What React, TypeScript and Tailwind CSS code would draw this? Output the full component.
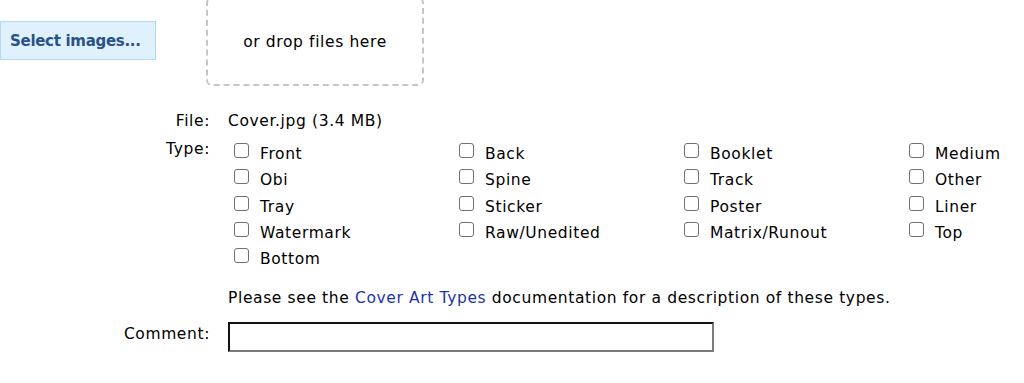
import React from "react";

const types = [
  "Front", "Back", "Booklet", "Medium",
  "Obi", "Spine", "Track", "Other",
  "Tray", "Sticker", "Poster", "Liner",
  "Watermark", "Raw/Unedited", "Matrix/Runout", "Top",
  "Bottom",
];

export default function App() {
  return (
    <div className="w-[1024px] h-[383px] overflow-hidden bg-white text-black text-[15.5px] leading-[18px] tracking-[0.62px]" style={{ fontFamily: '"DejaVu Sans", Verdana, sans-serif' }}>
      <div className="flex items-start">
        <button className="mt-[21px] h-[39px] w-[156px] bg-[#dff1fd] border border-[#b3daf3] text-[#2b5287] font-bold text-left pl-[9px] text-[15px] tracking-[-0.3px]">
          Select images...
        </button>
        <div className="ml-[50px] mt-[-3px] h-[89px] w-[218px] border-2 border-dashed border-[#c6c6c6] rounded-[6px] flex items-center justify-center">
          or drop files here
        </div>
      </div>

      <div className="mt-[26px] grid grid-cols-[210px_1fr] gap-x-[18px]">
        <div className="text-right">File:</div>
        <div>Cover.jpg (3.4 MB)</div>

        <div className="text-right mt-[10px]">Type:</div>
        <div className="mt-[11px] grid grid-cols-[225px_225px_225px_225px]">
          {types.map((t) => (
            <label key={t} className="h-[26.25px] flex items-start">
              <span className="ml-[6px] mt-[2px] w-[15px] h-[15px] border border-[#717171] rounded-[3px] bg-white shrink-0" />
              <span className="ml-[11px] mt-[4px] whitespace-nowrap">{t}</span>
            </label>
          ))}
        </div>

        <div />
        <div className="mt-[17px] whitespace-nowrap">
          Please see the <a className="text-[#1c34a6]">Cover Art Types</a> documentation for a description of these types.
        </div>

        <div className="text-right mt-[16px] pt-[2px]">Comment:</div>
        <div className="mt-[15px]">
          <input
            type="text"
            className="block w-[486px] h-[30px] border-2 border-t-[#111] border-l-[#111] border-b-[#7a7a7a] border-r-[#7a7a7a] outline-none"
          />
        </div>
      </div>
    </div>
  );
}
